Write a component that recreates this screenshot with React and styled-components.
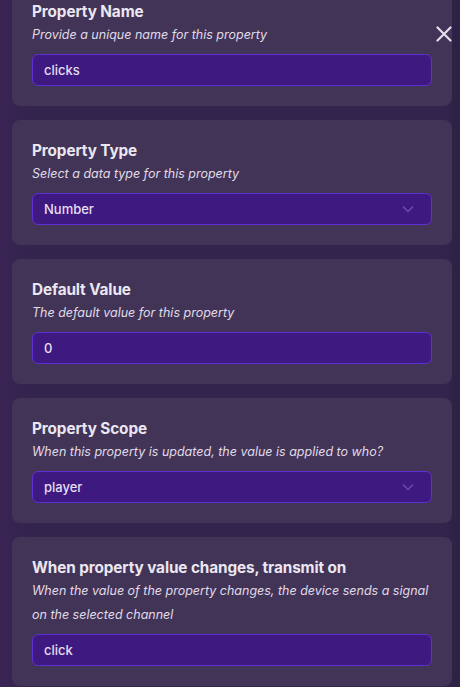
import React from "react";
import styled, { createGlobalStyle } from "styled-components";

const GlobalStyle = createGlobalStyle`
    html, body {
        margin: 0;
        padding: 0;
        height: 100%;
        overflow: hidden;
    }
    body {
        background: #33244d;
        font-family: Inter, "Noto Sans", sans-serif;
    }
`;

const fields = [
    { title: "Property Name", hint: "Provide a unique name for this property", value: "clicks" },
    { title: "Property Type", hint: "Select a data type for this property", value: "Number", select: true },
    { title: "Default Value", hint: "The default value for this property", value: "0" },
    {
        title: "Property Scope",
        hint: "When this property is updated, the value is applied to who?",
        value: "player",
        select: true,
    },
    {
        title: "When property value changes, transmit on",
        hint: "When the value of the property changes, the device sends a signal on the selected channel",
        value: "click",
    },
];

const App = () => {
    return (
        <Page>
            <GlobalStyle />
            <List>
                {fields.map((f) => (
                    <Card key={f.title}>
                        <Title>{f.title}</Title>
                        <Hint>{f.hint}</Hint>
                        <Field>
                            <span>{f.value}</span>
                            {f.select && (
                                <svg width="12" height="8" viewBox="0 0 12 8" fill="none">
                                    <path d="M1 1.5 L6 6.5 L11 1.5" stroke="#6f4fb3" strokeWidth="1.3" />
                                </svg>
                            )}
                        </Field>
                    </Card>
                ))}
            </List>
            <Close aria-label="close">
                <svg width="16" height="16" viewBox="0 0 16 16">
                    <path d="M1.5 1.5 L14.5 14.5 M14.5 1.5 L1.5 14.5" stroke="#e2dfe8" strokeWidth="2.2" strokeLinecap="round" />
                </svg>
            </Close>
        </Page>
    );
};

const Page = styled.div`
    position: relative;
    width: 460px;
    height: 687px;
    overflow: hidden;
    background: linear-gradient(90deg, #3a2455 0%, #33244d 6%, #33244d 96%, #2f2247 98.3%);
`;

const List = styled.div`
    display: flex;
    flex-direction: column;
    gap: 14px;
    margin-top: -19px;
    padding: 0 8px 0 12px;
`;

const Card = styled.div`
    background: #423457;
    border-radius: 8px;
    padding: 20px 20px 20px;
    display: flex;
    flex-direction: column;
`;

const Title = styled.div`
    color: #ebe7f1;
    font-size: 15.3px;
    font-weight: 700;
    line-height: 22px;
    letter-spacing: -0.1px;
`;

const Hint = styled.div`
    color: #e0dbe8;
    font-size: 12.5px;
    font-style: italic;
    line-height: 24px;
    margin-bottom: 7px;
`;

const Field = styled.div`
    height: 32px;
    box-sizing: border-box;
    background: #3e1a80;
    border: 1px solid #5f31d2;
    border-radius: 6px;
    padding: 0 17px 0 11px;
    display: flex;
    align-items: center;
    justify-content: space-between;
    color: #e4dff0;
    font-size: 13px;
    font-weight: 500;
`;

const Close = styled.div`
    position: absolute;
    top: 26px;
    left: 436px;
    width: 16px;
    height: 16px;
`;

export default App;
